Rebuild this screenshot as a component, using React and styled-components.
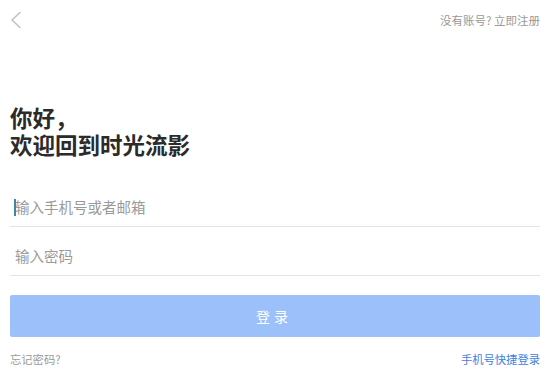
import React from "react";
import styled, { createGlobalStyle } from "styled-components";

const Global = createGlobalStyle`
  html, body { margin: 0; padding: 0; background: #fff; }
  body { font-family: "Noto Sans CJK SC", "Noto Sans", sans-serif; }
  * { box-sizing: border-box; }
`;

const Page = styled.div`
  width: 555px;
  height: 390px;
  padding: 0 15px 0 10px;
  display: flex;
  flex-direction: column;
  background: #fff;
  overflow: hidden;
`;

const TopBar = styled.div`
  height: 40px;
  display: flex;
  align-items: center;
  justify-content: space-between;
`;

const BackButton = styled.button`
  border: 0;
  background: none;
  padding: 0;
  width: 14px;
  height: 20px;
  display: flex;
  align-items: center;
  cursor: pointer;
`;

const SignupLink = styled.a`
  font-size: 11.5px;
  color: #999;
  text-decoration: none;
  line-height: 16px;
`;

const Heading = styled.h1`
  margin: 64px 0 0;
  font-size: 22.5px;
  line-height: 27px;
  font-weight: 700;
  color: #2b2b2b;
`;

const Form = styled.form`
  margin-top: 32px;
  display: flex;
  flex-direction: column;
`;

const Field = styled.div`
  position: relative;
  height: 37px;
  padding-bottom: 4px;
  border-bottom: 1px solid #e4e4e4;
  margin-top: ${(p) => (p.$first ? "0" : "12px")};
  display: flex;
  align-items: center;
`;

const Input = styled.input`
  width: 100%;
  border: 0;
  outline: none;
  background: transparent;
  padding: 0 0 0 5px;
  font-family: inherit;
  font-size: 14.5px;
  color: #333;
  caret-color: transparent;
  &::placeholder { color: #9a9a9a; }
`;

const Caret = styled.span`
  position: absolute;
  left: 4px;
  top: 9px;
  width: 2px;
  height: 17px;
  background: #3f86a8;
`;

const LoginButton = styled.button`
  margin-top: 19px;
  height: 42px;
  border: 0;
  border-radius: 2px;
  background: #9cc0f9;
  color: #fff;
  font-family: inherit;
  font-size: 14px;
  letter-spacing: 4px;
  padding-left: 4px;
`;

const BottomRow = styled.div`
  margin-top: 14px;
  display: flex;
  justify-content: space-between;
  align-items: center;
  line-height: 16px;
`;

const SmallLink = styled.a`
  font-size: 11.3px;
  color: ${(p) => (p.$blue ? "#3f7fdc" : "#9a9a9a")};
  text-decoration: none;
`;

export default function App() {
  return (
    <>
      <Global />
      <Page>
        <TopBar>
          <BackButton aria-label="返回">
            <svg width="12" height="18" viewBox="0 0 12 18" fill="none">
              <path d="M10 1.5 L2 9 L10 16.5" stroke="#c2c2c2" strokeWidth="1.6" strokeLinecap="round" strokeLinejoin="round" />
            </svg>
          </BackButton>
          <SignupLink href="#">没有账号? 立即注册</SignupLink>
        </TopBar>
        <Heading>
          你好，
          <br />
          欢迎回到时光流影
        </Heading>
        <Form onSubmit={(e) => e.preventDefault()}>
          <Field $first>
            <Caret />
            <Input placeholder="输入手机号或者邮箱" />
          </Field>
          <Field>
            <Input type="password" placeholder="输入密码" />
          </Field>
          <LoginButton type="submit">登录</LoginButton>
        </Form>
        <BottomRow>
          <SmallLink href="#">忘记密码?</SmallLink>
          <SmallLink href="#" $blue>手机号快捷登录</SmallLink>
        </BottomRow>
      </Page>
    </>
  );
}
